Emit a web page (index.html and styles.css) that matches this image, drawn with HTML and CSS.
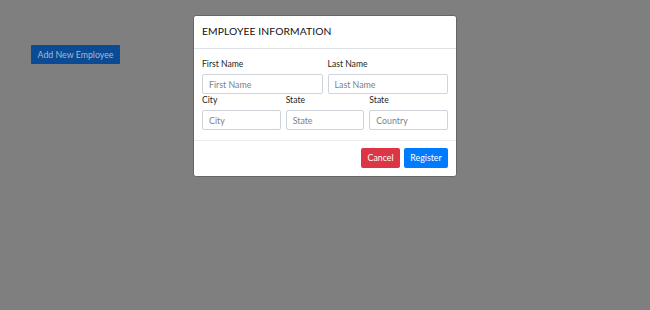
FILE: index.html
```html
<!DOCTYPE html>
<html lang="en">
<head>
    <meta charset="UTF-8">
    <meta name="viewport" content="width=device-width, initial-scale=1.0">
    <title>Employees</title>
    <link rel="stylesheet" href="styles.css">
</head>
<body>
    <div class="page">
        <button class="btn btn-add">Add New Employee</button>
    </div>

    <div class="backdrop">
        <div class="modal">
            <div class="modal-header">
                <h4 class="modal-title">EMPLOYEE INFORMATION</h4>
            </div>
            <div class="modal-body">
                <div class="form-row cols-2">
                    <div class="field">
                        <label for="firstName">First Name</label>
                        <input type="text" id="firstName" placeholder="First Name">
                    </div>
                    <div class="field">
                        <label for="lastName">Last Name</label>
                        <input type="text" id="lastName" placeholder="Last Name">
                    </div>
                </div>
                <div class="form-row cols-3">
                    <div class="field">
                        <label for="city">City</label>
                        <input type="text" id="city" placeholder="City">
                    </div>
                    <div class="field">
                        <label for="state">State</label>
                        <input type="text" id="state" placeholder="State">
                    </div>
                    <div class="field">
                        <label for="country">State</label>
                        <input type="text" id="country" placeholder="Country">
                    </div>
                </div>
            </div>
            <div class="modal-footer">
                <button class="btn btn-cancel">Cancel</button>
                <button class="btn btn-register">Register</button>
            </div>
        </div>
    </div>
</body>
</html>
```

FILE: styles.css
```css
* {
    box-sizing: border-box;
}

body {
    font-family: Lato, "Open Sans", Arial, sans-serif;
    font-size: 8.6px;
    line-height: 1.5;
    color: #1c1f23;
    background-color: #7f7f7f;
    margin: 0;
    width: 650px;
    height: 310px;
    overflow: hidden;
}

.page {
    padding: 45px 0 0 31px;
}

.btn {
    font-family: inherit;
    font-size: 8.8px;
    line-height: 1.5;
    height: 20px;
    padding: 0 4px;
    border: 1px solid transparent;
    border-radius: 2px;
    white-space: nowrap;
    cursor: pointer;
}

.btn-add {
    background-color: #0b4a94;
    color: #aab8cc;
    width: 89px;
    height: 19px;
    border-radius: 1px;
}

/* modal */
.backdrop {
    position: fixed;
    inset: 0;
    display: flex;
    justify-content: center;
    align-items: flex-start;
    padding-top: 15px;
}

.modal {
    width: 264px;
    background-color: #fff;
    border: 1px solid #666;
    border-radius: 3px;
}

.modal-header {
    padding: 7px 8px 9px;
    height: 33px;
    border-bottom: 1px solid #dee2e6;
}

.modal-title {
    margin: 0;
    font-size: 10.3px;
    font-weight: 400;
    line-height: 16px;
    letter-spacing: 0.1px;
    color: #111;
}

.modal-body {
    padding: 9px 8px 10px;
}

.form-row {
    display: grid;
    column-gap: 5px;
}

.cols-2 {
    grid-template-columns: 1fr 1fr;
}

.cols-3 {
    grid-template-columns: 1fr 1fr 1fr;
}

.field label {
    display: block;
    height: 13px;
    margin-bottom: 3px;
}

.field input {
    display: block;
    width: 100%;
    height: 20px;
    padding: 2px 6px;
    font-family: inherit;
    font-size: 8.8px;
    color: #495057;
    border: 1px solid #ced4da;
    border-radius: 2px;
    outline: none;
}

.field input::placeholder {
    color: #7a8289;
}

.modal-footer {
    display: flex;
    justify-content: flex-end;
    gap: 4px;
    padding: 7px 8px 8px;
    border-top: 1px solid #e9ecef;
}

.btn-cancel {
    background-color: #dc3545;
    color: #fff;
    width: 39px;
}

.btn-register {
    background-color: #007bff;
    color: #fff;
    width: 44px;
}
```
